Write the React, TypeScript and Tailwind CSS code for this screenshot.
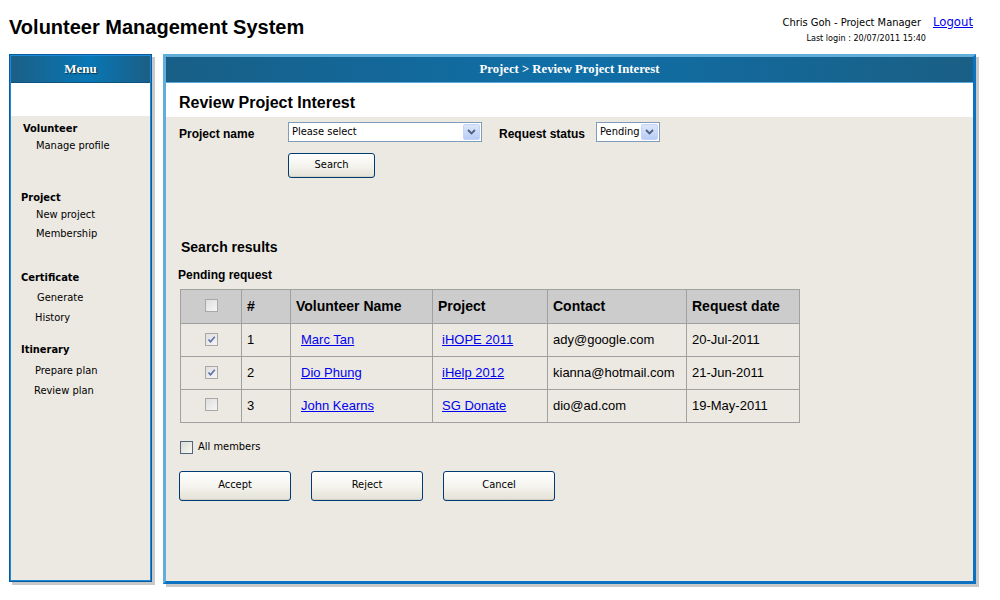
import React from 'react';

const arial = { fontFamily: '"Liberation Sans", Arial, sans-serif' };
const tahoma = { fontFamily: '"DejaVu Sans Condensed", "DejaVu Sans", Verdana, sans-serif' };

// sidebar lines, each with its own top gap to match the original spacing
const menu = [
    { label: 'Volunteer', head: true, mt: 'mt-[5px]', pl: 'pl-[12px]' },
    { label: 'Manage profile', head: false, mt: 'mt-[1px]', pl: 'pl-[25px]' },
    { label: 'Project', head: true, mt: 'mt-[36px]', pl: 'pl-[10px]' },
    { label: 'New project', head: false, mt: 'mt-[1px]', pl: 'pl-[25px]' },
    { label: 'Membership', head: false, mt: 'mt-[3px]', pl: 'pl-[25px]' },
    { label: 'Certificate', head: true, mt: 'mt-[28px]', pl: 'pl-[10px]' },
    { label: 'Generate', head: false, mt: 'mt-[4px]', pl: 'pl-[26px]' },
    { label: 'History', head: false, mt: 'mt-[4px]', pl: 'pl-[24px]' },
    { label: 'Itinerary', head: true, mt: 'mt-[16px]', pl: 'pl-[10px]' },
    { label: 'Prepare plan', head: false, mt: 'mt-[5px]', pl: 'pl-[24px]' },
    { label: 'Review plan', head: false, mt: 'mt-[4px]', pl: 'pl-[23px]' },
];

const rows = [
    { n: 1, name: 'Marc Tan', project: 'iHOPE 2011', contact: 'ady@google.com', date: '20-Jul-2011', checked: true },
    { n: 2, name: 'Dio Phung', project: 'iHelp 2012', contact: 'kianna@hotmail.com', date: '21-Jun-2011', checked: true },
    { n: 3, name: 'John Kearns', project: 'SG Donate', contact: 'dio@ad.com', date: '19-May-2011', checked: false },
];

function Chevron() {
    return (
        <svg width="9" height="6" viewBox="0 0 9 6">
            <path d="M1 1 L4.5 4.5 L8 1" fill="none" stroke="#4d6185" strokeWidth="1.8" />
        </svg>
    );
}

function XpSelect({ label, width }: { label: string; width: string }) {
    return (
        <div className={`${width} h-[20px] bg-white border border-[#7f9db9] flex items-stretch`}>
            <span className="flex-1 pl-[3px] text-[11px] leading-[17px] text-black" style={tahoma}>{label}</span>
            <span className="w-[17px] m-[1px] rounded-[2px] bg-gradient-to-b from-[#dce6f8] to-[#b8cdf5] border border-[#c3d3fd] flex items-center justify-center">
                <Chevron />
            </span>
        </div>
    );
}

function XpButton({ label, w, h }: { label: string; w: string; h: string }) {
    return (
        <button
            className={`${w} ${h} rounded-[3px] border border-[#003c74] bg-gradient-to-b from-white via-[#f5f4ef] to-[#e3e1d6] text-[11px] text-black shadow-[inset_0_-1px_0_#d6d0c5]`}
            style={tahoma}
        >
            {label}
        </button>
    );
}

function XpCheck({ checked, tone }: { checked?: boolean; tone: 'grey' | 'live' }) {
    return (
        <span
            className={`inline-flex w-[13px] h-[13px] items-center justify-center border ${
                tone === 'grey' ? 'border-[#a8a8a8] bg-gradient-to-br from-[#dedede] to-[#f6f6f6]' : 'border-[#52637c] bg-gradient-to-br from-[#dcdcd6] to-[#f8f8f4]'
            }`}
        >
            {checked && (
                <svg width="9" height="9" viewBox="0 0 9 9">
                    <path d="M1.5 4.5 L3.5 6.8 L7.8 1.8" fill="none" stroke="#5a72a8" strokeWidth="1.6" />
                </svg>
            )}
        </span>
    );
}

export default function App() {
    return (
        <div className="w-[1000px] h-[600px] bg-white overflow-hidden">
            {/* Top bar */}
            <div className="h-[54px] flex justify-between">
                <h1 className="pl-[9px] pt-[15px] text-[20px] leading-[24px] font-bold text-black" style={arial}>
                    Volunteer Management System
                </h1>
                <div className="pr-[27px] pt-[12px] flex flex-col items-end">
                    <div className="flex items-baseline gap-[12px]">
                        <span className="text-[11px] text-black" style={tahoma}>Chris Goh - Project Manager</span>
                        <a href="#" className="text-[13px] text-[#0000ee] underline" style={tahoma}>Logout</a>
                    </div>
                    <span className="mr-[47px] text-[9px] leading-[12px] text-black" style={tahoma}>Last login : 20/07/2011 15:40</span>
                </div>
            </div>

            <div className="flex">
                {/* Menu */}
                <div className="ml-[9px] w-[143px] h-[528px] border border-[#0a5a9c] shadow-[3px_3px_0_#c9c9c9]">
                    <div className="h-full border border-[#1b8ad8] flex flex-col">
                        <div
                            className="h-[27px] border-b border-[#0d5580] flex items-center justify-center text-[13px] font-bold text-white [text-shadow:1px_1px_1px_#082f48]"
                            style={{ fontFamily: '"Liberation Serif", "Times New Roman", serif', background: 'linear-gradient(to right, #1b5f86, #0877b5 55%, #1b5f86)' }}
                        >
                            Menu
                        </div>
                        <div className="h-[33px] bg-white" />
                        <div className="flex-1 bg-[#ece9e3]" style={tahoma}>
                            {menu.map(line => (
                                <div
                                    key={line.label}
                                    className={`${line.mt} ${line.pl} text-[11px] leading-[16px] text-black ${line.head ? 'font-bold' : ''}`}
                                >
                                    {line.label}
                                </div>
                            ))}
                        </div>
                    </div>
                </div>

                {/* Main panel */}
                <div className="ml-[11px] w-[813px] h-[530px] border-[3px] border-t-[#62aedb] border-l-[#62aedb] border-r-[#0b72c2] border-b-[#0b72c2] shadow-[3px_3px_0_#c9c9c9] flex flex-col">
                    <div
                        className="h-[26px] border-b border-[#5aa9d8] flex items-center justify-center text-[12.7px] font-bold text-white"
                        style={{ fontFamily: '"Liberation Serif", "Times New Roman", serif', background: 'linear-gradient(to right, #185f87, #0f6fa8 50%, #1a5f85)' }}
                    >
                        Project &gt; Review Project Interest
                    </div>
                    <div className="h-[34px] bg-white pl-[13px] pt-[10px]">
                        <h2 className="text-[16px] leading-[20px] font-bold text-black" style={arial}>Review Project Interest</h2>
                    </div>

                    <div className="flex-1 bg-[#ece9e3] pl-[13px] pt-[5px]" style={arial}>
                        <div className="flex items-start h-[20px]">
                            <span className="w-[109px] mt-[5px] text-[12px] leading-[14px] font-bold text-black">Project name</span>
                            <XpSelect label="Please select" width="w-[194px]" />
                            <span className="ml-[17px] w-[97px] mt-[5px] text-[12px] leading-[14px] font-bold text-black">Request status</span>
                            <XpSelect label="Pending" width="w-[64px]" />
                        </div>
                        <div className="ml-[109px] mt-[9px] h-[25px]">
                            <XpButton label="Search" w="w-[87px]" h="h-[25px]" />
                        </div>

                        <h3 className="mt-[63px] ml-[2px] text-[14px] leading-[16px] font-bold text-black">Search results</h3>
                        <div className="mt-[13px] ml-[-1px] text-[12px] leading-[14px] font-bold text-black">Pending request</div>

                        <table className="mt-[7px] ml-[1px] border-collapse text-[13px] text-black">
                            <thead>
                                <tr className="h-[34px] bg-[#cccccc]">
                                    <th className="w-[61px] border border-[#a0a0a0] text-center align-middle">
                                        <span className="inline-flex pt-[3px]"><XpCheck tone="grey" /></span>
                                    </th>
                                    <th className="w-[49px] border border-[#a0a0a0] text-left pl-[5px] text-[14px]">#</th>
                                    <th className="w-[142px] border border-[#a0a0a0] text-left pl-[5px] text-[14px]">Volunteer Name</th>
                                    <th className="w-[115px] border border-[#a0a0a0] text-left pl-[5px] text-[14px]">Project</th>
                                    <th className="w-[139px] border border-[#a0a0a0] text-left pl-[5px] text-[14px]">Contact</th>
                                    <th className="w-[113px] border border-[#a0a0a0] text-left pl-[5px] text-[14px]">Request date</th>
                                </tr>
                            </thead>
                            <tbody>
                                {rows.map(r => (
                                    <tr key={r.n} className="h-[33px]">
                                        <td className="border border-[#a0a0a0] text-center align-middle">
                                            <span className="inline-flex pt-[3px]"><XpCheck tone="grey" checked={r.checked} /></span>
                                        </td>
                                        <td className="border border-[#a0a0a0] pl-[5px]">{r.n}</td>
                                        <td className="border border-[#a0a0a0] pl-[10px]">
                                            <a href="#" className="text-[#0000ee] underline">{r.name}</a>
                                        </td>
                                        <td className="border border-[#a0a0a0] pl-[9px]">
                                            <a href="#" className="text-[#0000ee] underline">{r.project}</a>
                                        </td>
                                        <td className="border border-[#a0a0a0] pl-[5px]">{r.contact}</td>
                                        <td className="border border-[#a0a0a0] pl-[5px]">{r.date}</td>
                                    </tr>
                                ))}
                            </tbody>
                        </table>

                        <label className="mt-[16px] ml-[1px] flex items-center gap-[5px] text-[11px] text-black" style={tahoma}>
                            <XpCheck tone="live" />
                            All members
                        </label>

                        <div className="mt-[15px] flex gap-[20px]">
                            <XpButton label="Accept" w="w-[112px]" h="h-[30px]" />
                            <XpButton label="Reject" w="w-[112px]" h="h-[30px]" />
                            <XpButton label="Cancel" w="w-[112px]" h="h-[30px]" />
                        </div>
                    </div>
                </div>
            </div>
        </div>
    );
}
